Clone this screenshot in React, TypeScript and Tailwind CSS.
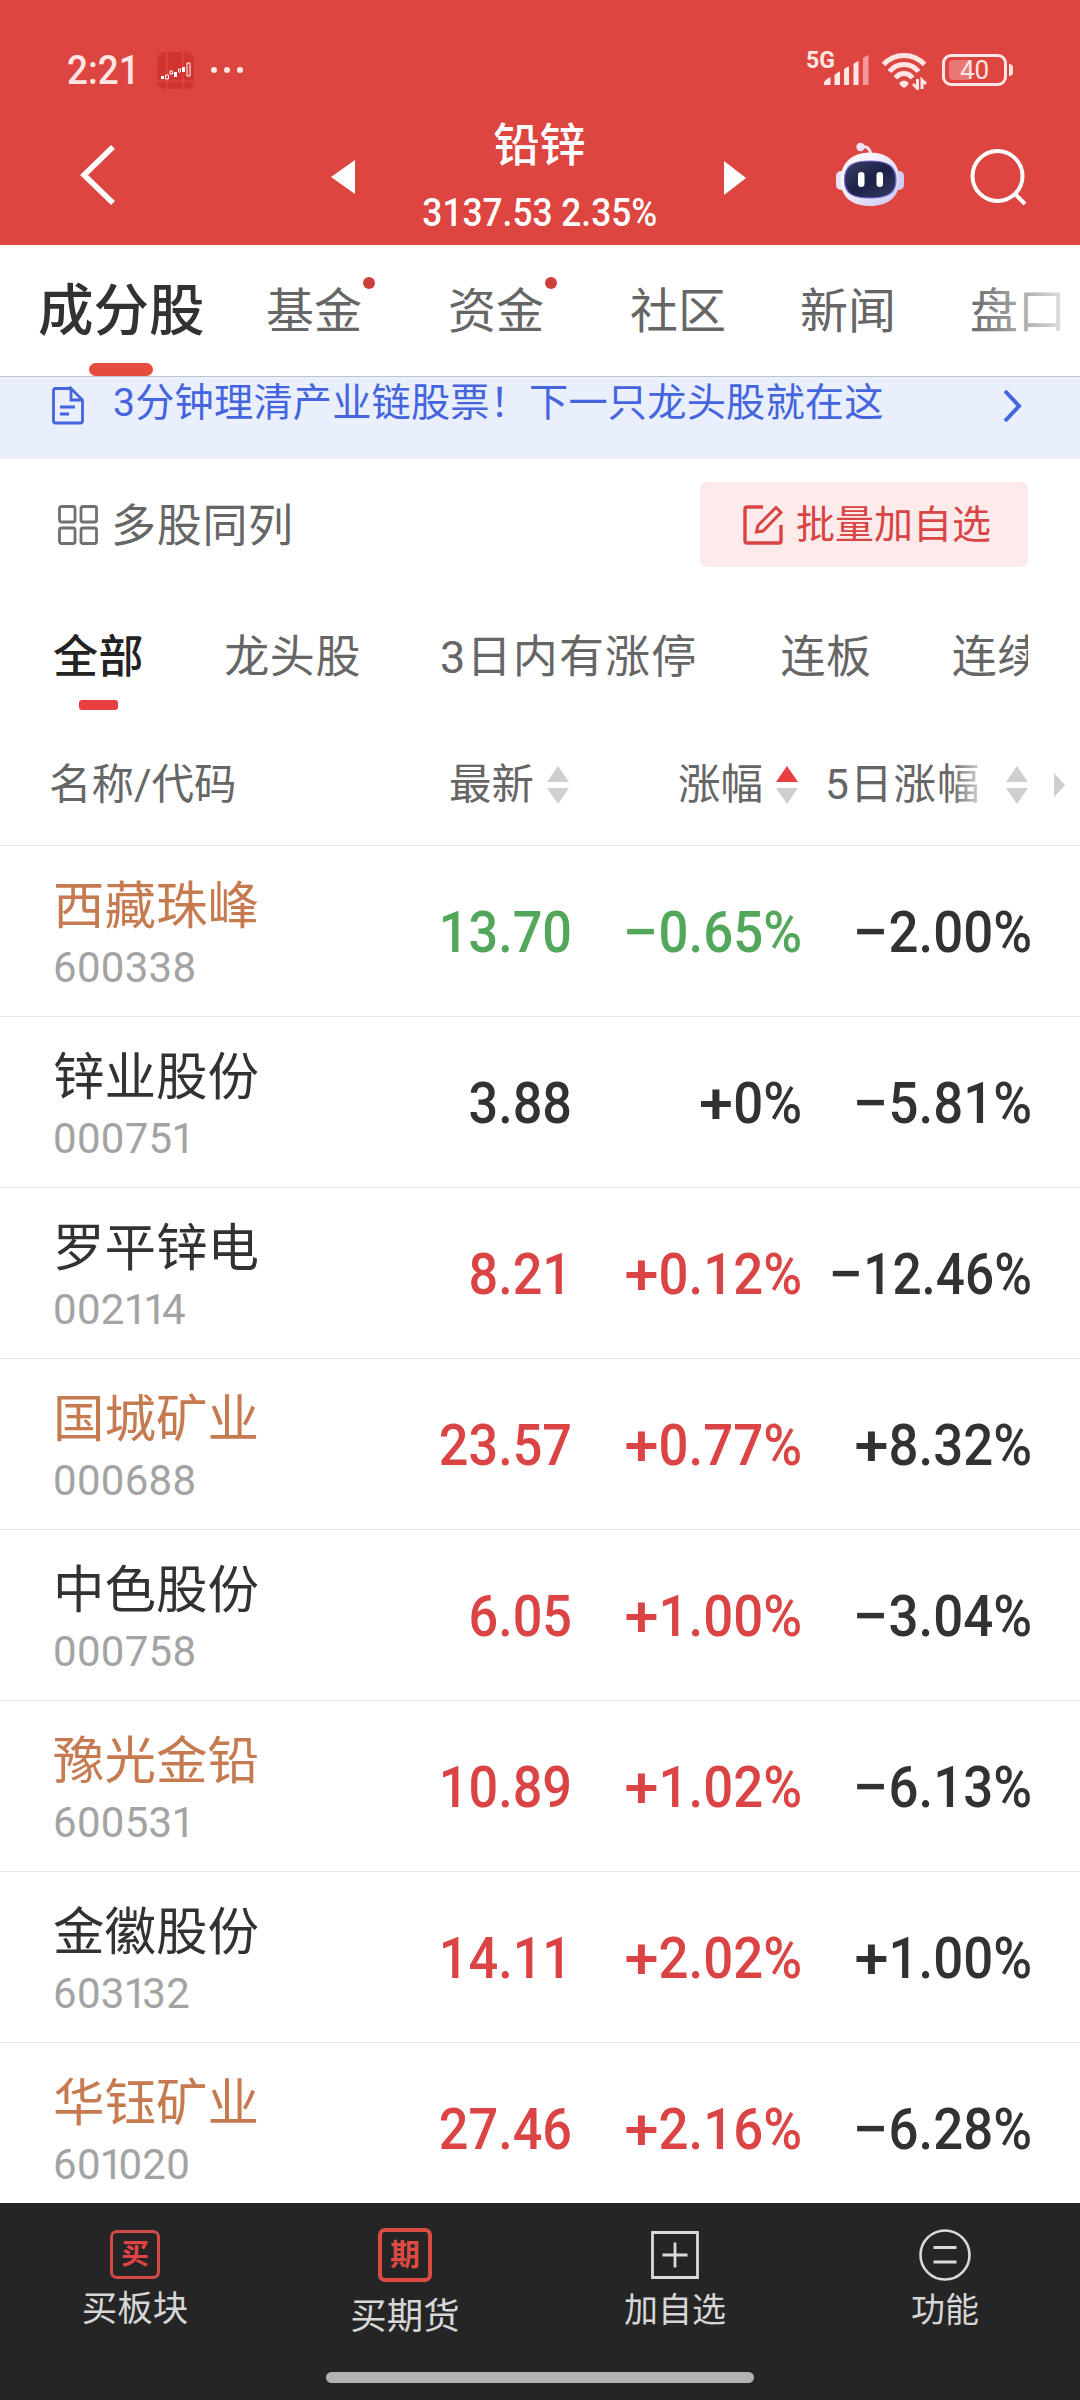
const tabs = [
  { name: "基金", dot: true, style: "ml-[60px]" },
  { name: "资金", dot: true, style: "ml-[86px]" },
  { name: "社区", dot: false, style: "ml-[86px]" },
  { name: "新闻", dot: false, style: "ml-[74px]" },
  { name: "盘口", dot: false, style: "ml-[74px]" },
];

const filters = [
  { name: "龙头股", style: "ml-[80px]" },
  { name: "3日内有涨停", style: "ml-[79px] tracking-[1.2px]" },
  { name: "连板", style: "ml-[83px]" },
  { name: "连续", style: "ml-[80px]" },
];

const stocks = [
  { name: "西藏珠峰", code: "600338", price: "13.70", change: "−0.65%", five: "−2.00%", hot: true, color: "text-[#52a75a]" },
  { name: "锌业股份", code: "000751", price: "3.88", change: "+0%", five: "−5.81%", hot: false, color: "text-[#323232]" },
  { name: "罗平锌电", code: "002114", price: "8.21", change: "+0.12%", five: "−12.46%", hot: false, color: "text-[#db4444]" },
  { name: "国城矿业", code: "000688", price: "23.57", change: "+0.77%", five: "+8.32%", hot: true, color: "text-[#db4444]" },
  { name: "中色股份", code: "000758", price: "6.05", change: "+1.00%", five: "−3.04%", hot: false, color: "text-[#db4444]" },
  { name: "豫光金铅", code: "600531", price: "10.89", change: "+1.02%", five: "−6.13%", hot: true, color: "text-[#db4444]" },
  { name: "金徽股份", code: "603132", price: "14.11", change: "+2.02%", five: "+1.00%", hot: false, color: "text-[#db4444]" },
  { name: "华钰矿业", code: "601020", price: "27.46", change: "+2.16%", five: "−6.28%", hot: true, color: "text-[#db4444]" },
];

function SortArrows({ active = false }: { active?: boolean }) {
  return (
    <svg className="shrink-0" width="22" height="40" viewBox="0 0 22 40">
      <path d="M11 1L22 17H0Z" fill={active ? "#e93f40" : "#cfcfcf"} />
      <path d="M11 39L22 23H0Z" fill="#cfcfcf" />
    </svg>
  );
}

function StatusBar() {
  return (
    <div className="h-[100px] pt-[40px] pl-[67px] pr-[67px] flex items-start justify-between text-[#ffe5e3]">
      <div className="h-[60px] flex items-center">
        <span className="w-[90px] text-[41px] leading-none font-medium origin-left scale-x-[0.9]">2:21</span>
        <svg width="37" height="37" viewBox="0 0 37 37">
          <rect width="37" height="37" rx="8" fill="#d23530" />
          <path d="M10 0V37M26 0V37M0 29H37" stroke="#dc5049" strokeWidth="1" />
          <path d="M4 24h3v3H4zM17 20h3v5h-3zM25 15h3v5h-3z" fill="#fff" />
          <path d="M8.500 23h3v4h-3zM13 19h2.500v3H13zM21.500 17h2v3h-2zM30 11h3v13h-3z" fill="none" stroke="#fff" />
        </svg>
        <div className="flex gap-[7px] ml-[17px]">
          <i className="size-[6px] rounded-full bg-[#ffe5e3]" />
          <i className="size-[6px] rounded-full bg-[#ffe5e3]" />
          <i className="size-[6px] rounded-full bg-[#ffe5e3]" />
        </div>
      </div>
      <div className="flex pt-[12px]">
        <span className="text-[23px] leading-none font-bold mt-[-3px] w-[18px] whitespace-nowrap">5G</span>
        <svg width="45" height="34" viewBox="0 0 45 34">
          <g fill="#ffe5e3">
            <path d="M0 33V30Q3 26 6.500 25V33Z" />
            <path d="M10.500 33V23Q13 20 16 19.500V33Z" />
            <path d="M20 33V17Q22 15 25 14.500V33Z" />
            <path d="M29.500 33V12Q32 10 34.500 9V33Z" />
          </g>
          <path d="M39 33V6Q42 4 44.500 3V33Z" fill="#f19a97" />
        </svg>
        <svg className="ml-[12px]" width="48" height="38" viewBox="0 0 48 38">
          <g fill="none" stroke="#ffe5e3" strokeWidth="5">
            <path d="M2.500 12.500Q11 3.500 23 3.500T43.500 12.500" />
            <path d="M8.500 19.500Q14 12.500 23 12.500T37.500 19.500" />
            <path d="M14.500 26Q18 21.500 23 21.500T31.500 26" />
          </g>
          <path d="M18 31Q23 26 28 31Q26 35 23 36Q20 35 18 31Z" fill="#ffe5e3" />
          <path d="M36.500 27V36.500L32 32M41 37V28L45 32" fill="none" stroke="#ffe5e3" strokeWidth="3" />
        </svg>
        <div className="relative w-[65px] h-[32px] mt-[2px] ml-[13px] border-[3px] border-[#ffe5e3] rounded-[9px] flex items-center justify-center">
          <div className="absolute left-[4px] top-[3px] w-[20px] h-[20px] rounded-l-[4px] bg-[#e97773]" />
          <span className="relative text-[26px] leading-none">40</span>
        </div>
        <i className="w-[4px] h-[12px] rounded-r-full bg-[#ffe5e3] ml-[2px] mt-[12px]" />
      </div>
    </div>
  );
}

function Robot() {
  return (
    <svg width="70" height="66" viewBox="0 0 70 66">
      <defs>
        <linearGradient id="shell" x1="0" y1="0" x2="1" y2="1">
          <stop offset="0.300" stopColor="#faf5fb" />
          <stop offset="1" stopColor="#c9c6f2" />
        </linearGradient>
        <linearGradient id="face" x1="0" y1="0" x2="1" y2="1">
          <stop offset="0" stopColor="#3c4164" />
          <stop offset="0.500" stopColor="#1c2247" />
          <stop offset="1" stopColor="#343a62" />
        </linearGradient>
      </defs>
      <path d="M25 5C31 3 35 6 36 13" fill="none" stroke="#efe3f3" strokeWidth="3" />
      <circle cx="25.500" cy="5" r="4.200" fill="#efe3f3" />
      <rect x="1" y="29" width="10" height="19" rx="5" fill="#e9e2f7" />
      <rect x="59" y="29" width="10" height="19" rx="5" fill="#cfcdf3" />
      <path d="M35 10.500C54 10.500 64.500 22 64.500 38C64.500 55 53 64 35 64C17 64 5.500 55 5.500 38C5.500 22 16 10.500 35 10.500Z" fill="url(#shell)" />
      <path d="M35 19C53 19 61 24 61 38C61 51 53 56 35 56C17 56 9.500 51 9.500 38C9.500 24 17 19 35 19Z" fill="url(#face)" stroke="#7668d8" strokeWidth="1.200" />
      <rect x="23" y="30" width="6.500" height="15" rx="3.200" fill="#fff" />
      <rect x="41.500" y="30" width="6.500" height="15" rx="3.200" fill="#fff" />
    </svg>
  );
}

function TopBar() {
  return (
    <div className="h-[145px] flex items-start text-white">
      <svg className="mt-[44px] ml-[78px]" width="40" height="62" viewBox="0 0 40 62">
        <path d="M35 3L6 31L35 59" fill="none" stroke="#fff" strokeWidth="5.500" />
      </svg>
      <svg className="mt-[60px] ml-[213px]" width="24" height="34" viewBox="0 0 24 34">
        <path d="M0 17L24 0V34Z" fill="#fff" />
      </svg>
      <div className="w-[369px] flex flex-col items-center">
        <span className="mt-[18px] text-[46px] leading-[54px] font-medium">铅锌</span>
        <span className="mt-[21px] text-[39px] leading-[40px] font-medium whitespace-nowrap scale-x-[0.905]">3137.53 2.35%</span>
      </div>
      <svg className="mt-[61px]" width="22" height="34" viewBox="0 0 22 34">
        <path d="M22 17L0 0V34Z" fill="#fff" />
      </svg>
      <div className="mt-[42px] ml-[89px]">
        <Robot />
      </div>
      <svg className="mt-[48px] ml-[64px]" width="60" height="60" viewBox="0 0 60 60">
        <circle cx="28.500" cy="28" r="25" fill="none" stroke="#fff" strokeWidth="4" />
        <path d="M46 46L56 56" stroke="#fff" strokeWidth="4" />
      </svg>
    </div>
  );
}

function Tabs() {
  return (
    <div className="relative h-[132px] pl-[38px] flex overflow-hidden border-b border-[#bfc1cc] text-[48px] leading-[60px] text-[#666]">
      <div className="relative w-[168px] shrink-0">
        <p className="mt-[37px] text-[55.5px] leading-[60px] font-medium text-[#323232] whitespace-nowrap">成分股</p>
        <div className="absolute left-[51px] bottom-0 w-[64px] h-[13px] rounded-full bg-[#e64c3d]" />
      </div>
      {tabs.map((tab) => (
        <div key={tab.name} className={`relative mt-[37px] shrink-0 ${tab.style}`}>
          {tab.name}
          {tab.dot && <i className="absolute right-[-13px] top-[-5px] size-[12px] rounded-full bg-[#cc3f3a]" />}
        </div>
      ))}
      <div className="absolute right-[16px] top-0 w-[96px] h-[130px] bg-linear-to-r from-white/0 to-white/80" />
    </div>
  );
}

function Banner() {
  return (
    <div className="h-[82px] bg-[#eaeffe] flex items-start text-[#4465dd]">
      <svg className="mt-[9px] ml-[51px]" width="34" height="40" viewBox="0 0 34 40">
        <path d="M20 2.500H4.500Q2.500 2.500 2.500 4.500V35Q2.500 37 4.500 37H29.500Q31.500 37 31.500 35V14L20 2.500V14H31" fill="none" stroke="#4465dd" strokeWidth="2.800" />
        <path d="M9 21H24M9 28H18" stroke="#4465dd" strokeWidth="2.800" />
      </svg>
      <p className="mt-px ml-[28px] w-[890px] text-[39.2px] tracking-[0.2px] leading-[50px] whitespace-nowrap">3分钟理清产业链股票！下一只龙头股就在这</p>
      <svg className="mt-[12px]" width="20" height="34" viewBox="0 0 20 34">
        <path d="M2 2L16 17L2 32" fill="none" stroke="#4465dd" strokeWidth="4" />
      </svg>
    </div>
  );
}

function Toolbar() {
  return (
    <div className="h-[131px] pt-[23px] pl-[58px] pr-[52px] flex items-start">
      <svg className="mt-[23px]" width="40" height="40" viewBox="0 0 40 40">
        <g fill="none" stroke="#707070" strokeWidth="2.800">
          <rect x="1.500" y="1.500" width="15.500" height="15.500" rx="2" />
          <rect x="23" y="1.500" width="15.500" height="15.500" rx="2" />
          <rect x="1.500" y="23" width="15.500" height="15.500" rx="2" />
          <rect x="23" y="23" width="15.500" height="15.500" rx="2" />
        </g>
      </svg>
      <span className="mt-[15px] ml-[13px] text-[45px] leading-[60px] tracking-[0.7px] text-[#666]">多股同列</span>
      <button className="ml-auto w-[328px] h-[85px] pl-[43px] rounded-md bg-[#fcebea] flex items-center text-[39px] leading-none text-[#d94444]">
        <svg width="40" height="40" viewBox="0 0 40 40" fill="none" stroke="#d94444" strokeWidth="3.400">
          <path d="M20 2H4Q2 2 2 4V36Q2 38 4 38H36Q38 38 38 36V20" />
          <path d="M33 2.500L38 7.500L20 26L13.500 27L15 20.500Z" strokeWidth="3" />
        </svg>
        <span className="ml-[13px] mt-px whitespace-nowrap">批量加自选</span>
      </button>
    </div>
  );
}

function Filters() {
  return (
    <div className="h-[145px] ml-[53px] mr-[52px] flex overflow-hidden text-[45px] leading-[60px] tracking-[0.6px] text-[#666]">
      <div className="shrink-0 flex flex-col items-center mt-[38px]">
        <span className="font-medium text-[#222]">全部</span>
        <i className="mt-[12px] w-[39px] h-[10px] rounded-[3px] bg-[#e93f40]" />
      </div>
      {filters.map((filter) => (
        <span key={filter.name} className={`shrink-0 mt-[38px] ${filter.style}`}>{filter.name}</span>
      ))}
    </div>
  );
}

function TableHead() {
  return (
    <div className="h-[111px] pb-[11px] pl-[49px] flex items-center border-b border-[#e8e8e8] text-[42.5px] leading-[60px] text-[#666]">
      <span className="w-[400px]">名称/代码</span>
      <div className="w-[120px] flex items-center justify-between">
        最新 <SortArrows />
      </div>
      <div className="ml-[109px] w-[120px] flex items-center justify-between">
        涨幅 <SortArrows active />
      </div>
      <div className="relative ml-[27px] w-[155px] h-[60px] overflow-hidden whitespace-nowrap tracking-[1px]">
        5日涨幅
        <div className="absolute right-0 top-0 w-[30px] h-[60px] bg-linear-to-r from-white/0 to-white/70" />
      </div>
      <div className="ml-[26px] flex items-center gap-[26px]">
        <SortArrows />
        <svg width="11" height="24" viewBox="0 0 11 24">
          <path d="M0 0L11 12L0 24Z" fill="#cfcfcf" />
        </svg>
      </div>
    </div>
  );
}

// the digit 1 takes less room than the other digits
function Code({ value }: { value: string }) {
  return (
    <p className="mt-[6px] text-[42px] leading-[50px] font-normal text-[#a3a3a3]">
      {value.split(/(1+)/).map((part, i) => (
        <span key={i} className={part.startsWith("1") ? "-mx-[1px] tracking-[-4px]" : "tracking-[0.3px]"}>{part}</span>
      ))}
    </p>
  );
}

// signed percentage, with a wide minus
function Percent({ value }: { value: string }) {
  return (
    <>
      <span className={`inline-block origin-right ${value[0] === "−" ? "scale-x-[1.22]" : "scale-x-[1.16]"}`}>{value[0]}</span>
      {value.slice(1)}
    </>
  );
}

function BottomNav() {
  return (
    <div className="relative h-[197px] bg-[#252525] grid grid-cols-4 text-[#d6d6d6]">
      <div className="flex flex-col items-center pt-[27px]">
        <div className="w-[50px] h-[49px] border-[3px] border-[#d24b49] rounded-[7px] flex items-center justify-center text-[28px] leading-none font-bold text-[#e04444]">买</div>
        <span className="mt-[7px] text-[35.5px] leading-[46px]">买板块</span>
      </div>
      <div className="flex flex-col items-center pt-[25px]">
        <div className="w-[54px] h-[54px] border-[4px] border-[#dc4b42] rounded-[7px] flex items-center justify-center text-[30px] leading-none font-bold text-[#dc4b42]">期</div>
        <span className="mt-[12px] text-[36.5px] leading-[46px]">买期货</span>
      </div>
      <div className="flex flex-col items-center pt-[28px]">
        <svg width="48" height="48" viewBox="0 0 48 48">
          <path d="M1.500 1.500H46.500V46.500H1.500ZM24 11.500V36.500M11.500 24H36.500" fill="none" stroke="#d9dbdb" strokeWidth="2.800" />
        </svg>
        <span className="mt-[8px] text-[34px] leading-[46px]">加自选</span>
      </div>
      <div className="flex flex-col items-center pt-[26px]">
        <svg width="52" height="52" viewBox="0 0 52 52">
          <circle cx="26" cy="26" r="24.500" fill="none" stroke="#d9dbdb" strokeWidth="2.600" />
          <path d="M14.500 18.500H37.500M14.500 33H37.500" stroke="#d9dbdb" strokeWidth="2.800" />
        </svg>
        <span className="mt-[6px] text-[34px] leading-[46px]">功能</span>
      </div>
      <div className="absolute left-[326px] top-[169px] w-[428px] h-[11px] rounded-full bg-[#b3b3b3]" />
    </div>
  );
}

export default function App() {
  return (
    <div className="w-[1080px] h-[2400px] overflow-hidden flex flex-col bg-white font-['Roboto','Noto_Sans_CJK_SC',sans-serif]">
      <div className="h-[245px] shrink-0 bg-[#dd4540]">
        <StatusBar />
        <TopBar />
      </div>
      <Tabs />
      <Banner />
      <Toolbar />
      <Filters />
      <TableHead />
      <div className="h-[1357px] overflow-hidden">
        {stocks.map((stock) => (
          <div key={stock.code} className="h-[171px] pl-[53px] flex border-b border-[#e8e8e8] text-[58px] leading-[60px] font-medium">
            <div className="w-[257px] pt-[31px]">
              <p className={`text-[51.5px] leading-[60px] font-normal ${stock.hot ? "text-[#c67a50]" : "text-[#323232]"}`}>{stock.name}</p>
              <Code value={stock.code} />
            </div>
            <p className={`w-[262px] pt-[56px] text-right origin-right scale-x-[0.9] ${stock.color}`}>{stock.price}</p>
            <p className={`w-[230px] pt-[56px] text-right origin-right scale-x-[0.91] ${stock.color}`}>
              <Percent value={stock.change} />
            </p>
            <p className={`w-[230px] pt-[56px] text-right whitespace-nowrap origin-right text-[#323232] ${stock.five.length > 6 ? "scale-x-[0.885]" : "scale-x-[0.91]"}`}>
              <Percent value={stock.five} />
            </p>
          </div>
        ))}
      </div>
      <BottomNav />
    </div>
  );
}
